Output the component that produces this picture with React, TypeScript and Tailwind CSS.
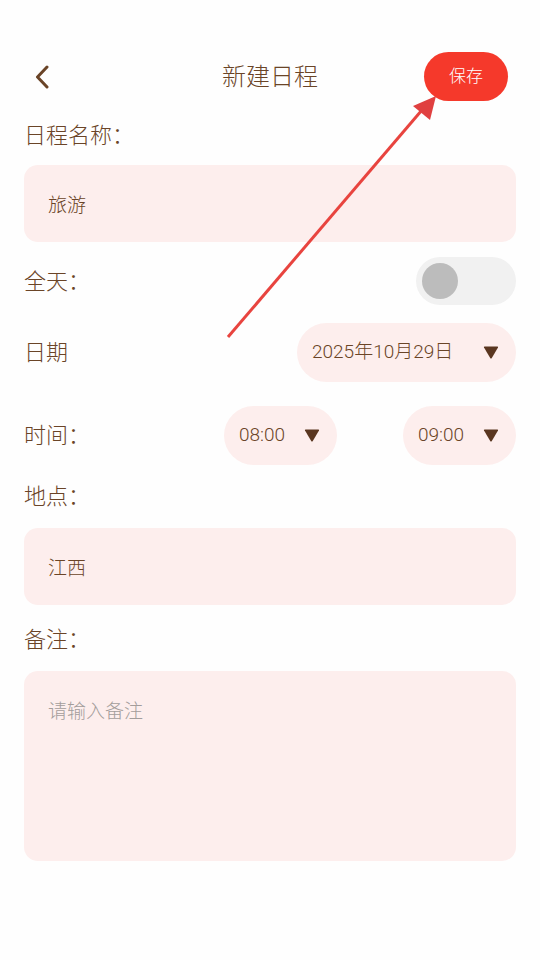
const font = { fontFamily: "Roboto, 'Noto Sans CJK SC', sans-serif" }

function Caret() {
  return (
    <svg width="16" height="13" viewBox="0 0 16 13" className="shrink-0">
      <path d="M1 1.5 Q0.5 0.5 1.8 0.5 H14.2 Q15.5 0.5 15 1.5 L8.8 12 Q8 13 7.2 12 Z" fill="#5a3620" />
    </svg>
  )
}

function Pill({ text, className }: { text: string; className: string }) {
  return (
    <div className={"flex h-[59px] items-center justify-between rounded-full bg-[#fdeeed] pl-[15px] pr-[17px] " + className}>
      <span className="text-[19px] text-[#6a4427]">{text}</span>
      <Caret />
    </div>
  )
}

export default function App() {
  return (
    <div className="relative h-[960px] w-[540px] overflow-hidden bg-[#fefefe] pt-[52px] font-light" style={font}>
      <header className="grid h-[49px] grid-cols-[1fr_auto_1fr] items-center px-[24px]">
        <svg width="14" height="24" viewBox="0 0 14 24" className="ml-[11px]">
          <path d="M12 2 L2.5 12 L12 22" fill="none" stroke="#6a4427" strokeWidth="3" strokeLinecap="round" strokeLinejoin="round" />
        </svg>
        <h1 className="text-[24px] text-[#6a4427]">新建日程</h1>
        <button className="mr-[8px] h-[49px] w-[84px] justify-self-end rounded-full bg-[#f5392b] text-[17px] text-white">保存</button>
      </header>

      <main className="flex flex-col px-[24px]">
        <div className="mt-[20px] h-[30px] text-[22px] leading-[30px] text-[#6a4427]">日程名称：</div>
        <div className="mt-[14px] flex h-[77px] items-center rounded-[14px] bg-[#fdeeed] px-[24px] pt-[6px] text-[19px] text-[#6a4427]">旅游</div>

        <div className="mt-[15px] flex h-[48px] items-center justify-between">
          <span className="text-[22px] text-[#6a4427]">全天：</span>
          <div className="flex h-[48px] w-[100px] items-center rounded-full bg-[#f1f1f1] pl-[6px]">
            <div className="h-[36px] w-[36px] rounded-full bg-[#bcbcbc]" />
          </div>
        </div>

        <div className="mt-[18px] flex items-center justify-between">
          <span className="text-[22px] text-[#6a4427]">日期</span>
          <Pill text="2025年10月29日" className="w-[219px]" />
        </div>

        <div className="mt-[24px] flex items-center">
          <span className="flex-1 text-[22px] text-[#6a4427]">时间：</span>
          <Pill text="08:00" className="w-[113px]" />
          <div className="w-[66px]" />
          <Pill text="09:00" className="w-[113px]" />
        </div>

        <div className="mt-[17px] h-[30px] text-[22px] leading-[30px] text-[#6a4427]">地点：</div>
        <div className="mt-[16px] flex h-[77px] items-center rounded-[14px] bg-[#fdeeed] px-[24px] pt-[6px] text-[19px] text-[#6a4427]">江西</div>

        <div className="mt-[20px] h-[30px] text-[22px] leading-[30px] text-[#6a4427]">备注：</div>
        <div className="mt-[16px] h-[190px] rounded-[14px] bg-[#fdeeed] px-[24px] pt-[27px] text-[19px] text-[#a39d9b]">请输入备注</div>
      </main>

      <svg className="pointer-events-none absolute inset-0" width="540" height="960" viewBox="0 0 540 960">
        <line x1="228" y1="337" x2="422" y2="110" stroke="#e8443f" strokeWidth="3" />
        <path d="M436 96 L413 106 L430 120 Z" fill="#e04040" />
      </svg>
    </div>
  )
}
